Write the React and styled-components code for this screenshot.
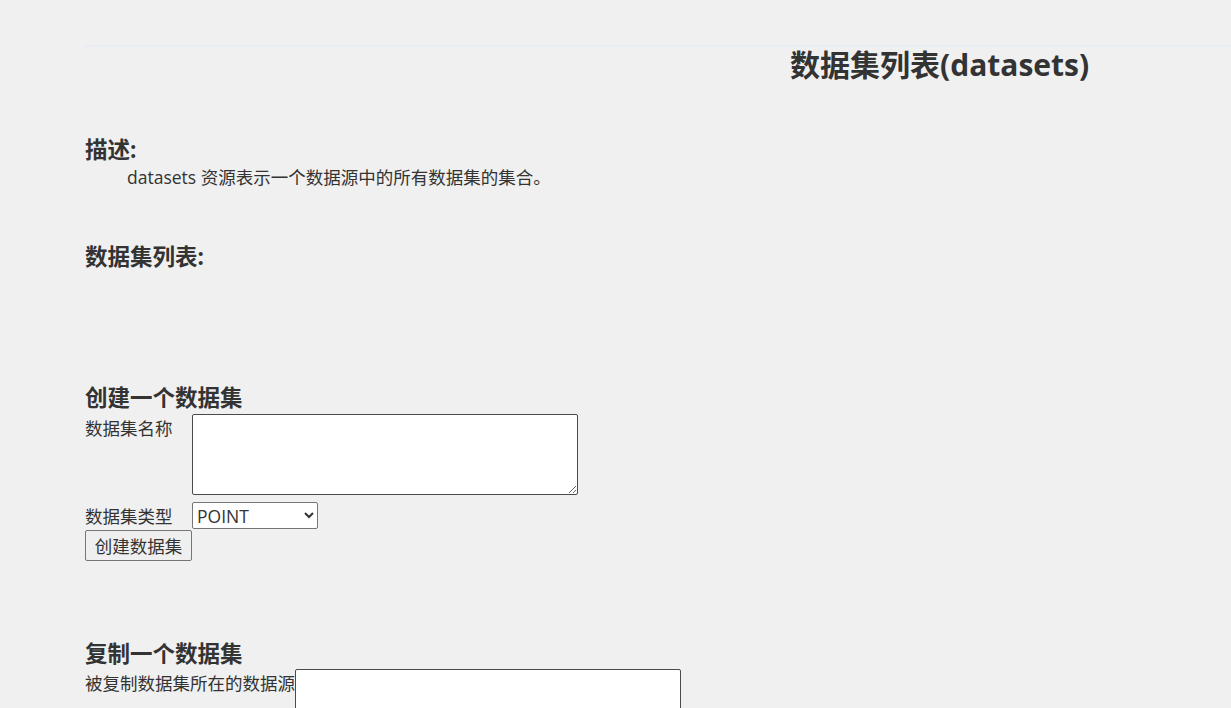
import React from 'react'
import styled, { createGlobalStyle } from 'styled-components'

const GlobalStyle = createGlobalStyle`
  body {
    margin: 0;
    background: #f0f0f0;
    color: #333;
    font-family: "Open Sans", "Noto Sans CJK SC", sans-serif;
    overflow: hidden;
  }
`

const Page = styled.div`
  padding-top: 45px;
`
const Rule = styled.div`
  height: 2px;
  margin-left: 85px;
  background: #e8edf4;
`
const Title = styled.h1`
  margin: 0;
  padding-left: 790px;
  font-size: 30px;
  line-height: 36px;
  font-weight: bold;
  white-space: nowrap;
`
const Content = styled.div`
  padding-left: 85px;
`
const SectionTitle = styled.h3`
  margin: ${p => p.$gap}px 0 0;
  font-size: 22.5px;
  line-height: 28px;
  font-weight: bold;
`
const Description = styled.p`
  margin: 1px 0 0;
  padding-left: 42px;
  font-size: 17.5px;
  line-height: 24px;
`
const Row = styled.div`
  display: flex;
  align-items: ${p => (p.$center ? 'center' : 'flex-start')};
  margin-top: ${p => p.$gap}px;
`
const Label = styled.label`
  min-width: 107px;
  padding-top: ${p => (p.$center ? 0 : 2)}px;
  font-size: 17.5px;
  line-height: 24px;
  white-space: nowrap;
`
const TextArea = styled.textarea`
  box-sizing: border-box;
  width: 386px;
  height: 81px;
  margin: 0;
  border: 1px solid #4a4a4a;
  border-radius: 2px;
  background: #fff;
`
const Select = styled.select`
  box-sizing: border-box;
  width: 126px;
  height: 27px;
  margin: 0;
  font-family: "Open Sans", sans-serif;
  font-size: 17.5px;
  color: #333;
  border: 1px solid #767676;
  border-radius: 2px;
  background: #fff;
`
const Button = styled.button`
  box-sizing: border-box;
  display: block;
  width: 107px;
  height: 31px;
  margin-top: 1px;
  padding: 0;
  font-family: "Noto Sans CJK SC", sans-serif;
  font-size: 17.5px;
  color: #333;
  background: #efefef;
  border: 1px solid #767676;
  border-radius: 2px;
`

export default function App() {
  return (
    <Page>
      <GlobalStyle />
      <Rule />
      <Title>数据集列表(datasets)</Title>
      <Content>
        <SectionTitle $gap={53}>描述:</SectionTitle>
        <Description>datasets 资源表示一个数据源中的所有数据集的集合。</Description>
        <SectionTitle $gap={54}>数据集列表:</SectionTitle>
        <SectionTitle $gap={113}>创建一个数据集</SectionTitle>
        <Row $gap={2}>
          <Label>数据集名称</Label>
          <TextArea />
        </Row>
        <Row $gap={7} $center>
          <Label $center>数据集类型</Label>
          <Select defaultValue="POINT">
            <option>POINT</option>
            <option>LINE</option>
            <option>REGION</option>
          </Select>
        </Row>
        <Button>创建数据集</Button>
        <SectionTitle $gap={79}>复制一个数据集</SectionTitle>
        <Row $gap={1}>
          <Label>被复制数据集所在的数据源</Label>
          <TextArea />
        </Row>
      </Content>
    </Page>
  )
}
